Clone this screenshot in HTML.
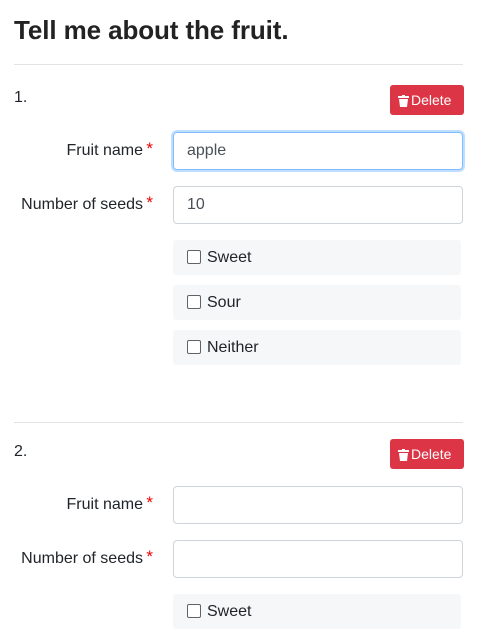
<!DOCTYPE html>
<html><head><style>
body{margin:0;background:#fff;font-family:"Liberation Sans",Arial,sans-serif;color:#212529;width:478px;height:630px;overflow:hidden;position:relative}
h1{position:absolute;left:14px;top:15px;margin:0;font-size:26px;font-weight:bold;letter-spacing:-0.1px;color:#222}
.hr{position:absolute;left:14px;width:449px;height:1px;background:#e3e3e3}
.num{position:absolute;left:14px;font-size:16px}
.del{position:absolute;left:390px;width:74px;height:30px;background:#dc3545;border-radius:3px;color:#fff;font-size:14px;line-height:30px;box-sizing:border-box;padding-left:8px}
.del svg{vertical-align:-2px;margin-right:2px}
.lbl{position:absolute;right:335px;font-size:16px;text-align:right;white-space:nowrap}
.lbl b{position:absolute;right:-10px;top:-3px;color:#e00;font-weight:normal;font-size:17px}
.in{position:absolute;left:173px;width:290px;height:38px;border:1px solid #ced4da;border-radius:4px;box-sizing:border-box;font-size:16px;color:#495057;padding:9px 13px}
.focus{border-color:#80bdff;box-shadow:0 0 0 2px rgba(0,123,255,.25)}
.cb{position:absolute;left:173px;width:288px;height:35px;background:#f6f7f9;border-radius:3px;font-size:16px;line-height:35px;padding-left:14px;box-sizing:border-box}
.cb i{display:inline-block;width:12px;height:12px;border:1px solid #5f6368;border-radius:2px;vertical-align:-2px;margin-right:6px;background:#fff}
</style></head><body>
<h1>Tell me about the fruit.</h1>
<div class="hr" style="top:64px"></div>
<div class="num" style="top:89px">1.</div>
<div class="del" style="top:85px"><svg width="11" height="12" viewBox="0 0 11 12"><rect x="0" y="1" width="11" height="2" fill="#fff"/><rect x="4" y="0" width="3" height="2" fill="#fff"/><path d="M1 4h9l-1 8H2z" fill="#fff"/></svg>Delete</div>
<div class="lbl" style="top:142px">Fruit name<b>*</b></div>
<div class="in focus" style="top:132px">apple</div>
<div class="lbl" style="top:196px">Number of seeds<b>*</b></div>
<div class="in" style="top:186px">10</div>
<div class="cb" style="top:240px"><i></i>Sweet</div>
<div class="cb" style="top:285px"><i></i>Sour</div>
<div class="cb" style="top:330px"><i></i>Neither</div>
<div class="hr" style="top:422px"></div>
<div class="num" style="top:443px">2.</div>
<div class="del" style="top:439px"><svg width="11" height="12" viewBox="0 0 11 12"><rect x="0" y="1" width="11" height="2" fill="#fff"/><rect x="4" y="0" width="3" height="2" fill="#fff"/><path d="M1 4h9l-1 8H2z" fill="#fff"/></svg>Delete</div>
<div class="lbl" style="top:496px">Fruit name<b>*</b></div>
<div class="in" style="top:486px"></div>
<div class="lbl" style="top:550px">Number of seeds<b>*</b></div>
<div class="in" style="top:540px"></div>
<div class="cb" style="top:594px"><i></i>Sweet</div>
</body></html>
